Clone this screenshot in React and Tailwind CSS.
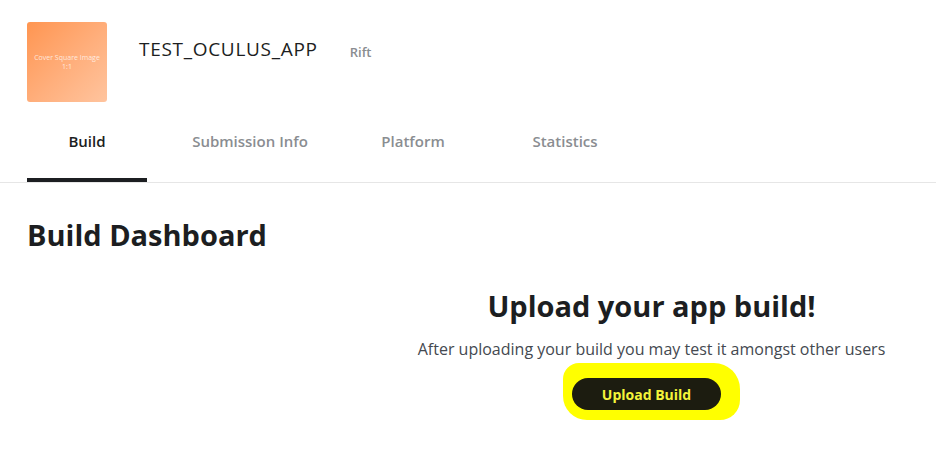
import React from "react";

const tabs = [
  { label: "Build", width: "w-[120px]", active: true },
  { label: "Submission Info", width: "w-[160px]" },
  { label: "Platform", width: "w-[166px]" },
  { label: "Statistics", width: "w-[138px]" },
];

const App = () => {
  return (
    <div className="w-[936px] h-[449px] bg-white overflow-hidden font-['Open_Sans',sans-serif] text-[#1c1e21]">
      {/* Header */}
      <div className="flex items-start px-[27px] pt-[22px]">
        <div className="w-[80px] h-[80px] rounded-[3px] bg-gradient-to-br from-[#ff9550] to-[#ffc49e] flex flex-col items-center justify-center text-white/75 text-[7px] leading-[9px]">
          <span>Cover Square Image</span>
          <span>1:1</span>
        </div>
        <h1 className="ml-[32px] mt-[15px] text-[19px] leading-6 tracking-[0.7px]">
          TEST_OCULUS_APP
        </h1>
        <span className="ml-[32px] mt-[20px] text-[13px] leading-5 font-semibold text-[#8a8d91]">
          Rift
        </span>
      </div>

      {/* Tabs */}
      <div className="mt-[18px] flex border-b border-[#e6e6e6] pl-[27px]">
        {tabs.map((t, i) => (
          <div
            key={t.label}
            className={`${t.width} ${i === 1 ? "ml-[23px]" : ""} h-[62px] pt-[11px] flex items-start justify-center text-[15px] leading-5 font-semibold border-b-4 ${
              t.active
                ? "border-[#1c1e21] text-[#1c1e21]"
                : "border-transparent text-[#8a8d91]"
            }`}
          >
            {t.label}
          </div>
        ))}
      </div>

      {/* Body */}
      <div className="px-[27px] pt-[34px]">
        <h2 className="text-[29px] leading-[36px] font-bold">Build Dashboard</h2>
        <div className="flex">
          <div className="w-[367px] shrink-0" />
          <div className="flex-1 flex flex-col items-center pt-[35px]">
            <h3 className="text-[29px] leading-[36px] font-bold">
              Upload your app build!
            </h3>
            <p className="mt-[15px] text-[16px] leading-5 text-[#444950]">
              After uploading your build you may test it amongst other users
            </p>
            <div className="mt-[4px] bg-[#ffff00] rounded-[16px_26px_20px_24px] pl-[9px] pr-[19px] pt-[15px] pb-[10px]">
              <button className="w-[149px] h-[32px] rounded-full bg-[#1c1c10] text-[#f4f43a] text-[14px] font-bold">
                Upload Build
              </button>
            </div>
          </div>
        </div>
      </div>
    </div>
  );
};

export default App;
